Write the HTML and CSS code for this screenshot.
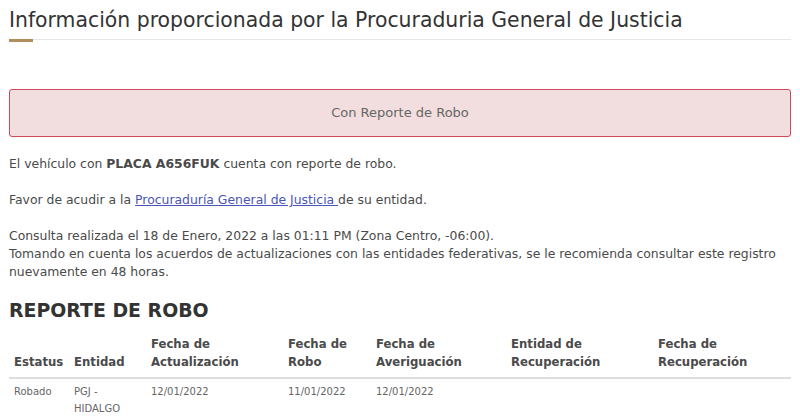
FILE: index.html
```html
<!DOCTYPE html>
<html lang="es">
<head>
    <meta charset="UTF-8">
    <meta name="viewport" content="width=device-width, initial-scale=1.0">
    <title>Consulta REPUVE</title>
    <link rel="stylesheet" href="styles.css">
</head>
<body>
    <div class="container">
        <h2 class="title">Información proporcionada por la Procuraduria General de Justicia</h2>
        <div class="title-rule"><span class="small-bar"></span></div>

        <div class="alert">Con Reporte de Robo</div>

        <p>El vehículo con <strong>PLACA A656FUK</strong> cuenta con reporte de robo.</p>
        <p>Favor de acudir a la <a href="#">Procuraduría General de Justicia </a>de su entidad.</p>
        <p>Consulta realizada el 18 de Enero, 2022 a las 01:11 PM (Zona Centro, -06:00).<br>
        Tomando en cuenta los acuerdos de actualizaciones con las entidades federativas, se le recomienda consultar este registro nuevamente en 48 horas.</p>

        <h3 class="section-title">REPORTE DE ROBO</h3>
        <table class="report">
            <colgroup>
                <col class="c1"><col class="c2"><col class="c3"><col class="c4"><col class="c5"><col class="c6"><col class="c7">
            </colgroup>
            <thead>
                <tr>
                    <th>Estatus</th>
                    <th>Entidad</th>
                    <th>Fecha de Actualización</th>
                    <th>Fecha de Robo</th>
                    <th>Fecha de Averiguación</th>
                    <th>Entidad de Recuperación</th>
                    <th>Fecha de Recuperación</th>
                </tr>
            </thead>
            <tbody>
                <tr>
                    <td>Robado</td>
                    <td>PGJ - HIDALGO</td>
                    <td>12/01/2022</td>
                    <td>11/01/2022</td>
                    <td>12/01/2022</td>
                    <td></td>
                    <td></td>
                </tr>
            </tbody>
        </table>
    </div>
</body>
</html>
```

FILE: styles.css
```css
body {
    font-family: "DejaVu Sans", sans-serif;
    color: #4a4a4a;
    background: #fff;
    margin: 0;
    padding: 0;
}

.container {
    padding: 0 9px;
}

.title {
    font-size: 20.4px;
    font-weight: normal;
    color: #333;
    margin: 0;
    padding-top: 6px;
    line-height: 28px;
}

.title-rule {
    border-bottom: 1px solid #e6e6e6;
    margin-top: 5px;
    position: relative;
    height: 0;
}

.small-bar {
    position: absolute;
    left: 0;
    top: 0;
    width: 24px;
    height: 3px;
    background: #b38e5d;
}

.alert {
    margin-top: 49px;
    height: 46px;
    line-height: 46px;
    background: #f2dede;
    border: 1px solid #d04a5a;
    border-radius: 3px;
    text-align: center;
    color: #666;
    font-size: 13px;
}

p {
    font-size: 12.4px;
    line-height: 18px;
    margin: 18px 0 0;
}

p + p {
    margin-top: 18px;
}

a {
    color: #4a55b5;
}

.section-title {
    font-size: 18.9px;
    font-weight: bold;
    color: #333;
    margin: 16px 0 0;
    line-height: 26px;
}

.report {
    width: 100%;
    border-collapse: collapse;
    margin-top: 12px;
    font-size: 11.7px;
}

.report th {
    text-align: left;
    vertical-align: bottom;
    font-weight: bold;
    line-height: 18px;
    padding: 0 5px 6px;
    border-bottom: 2px solid #ddd;
}

.report td {
    font-size: 10px;
    line-height: 17px;
    color: #666;
    vertical-align: top;
    padding: 4px 5px 0;
}

.c1 { width: 60px; }
.c2 { width: 77px; }
.c3 { width: 137px; }
.c4 { width: 88px; }
.c5 { width: 135px; }
.c6 { width: 147px; }
.c7 { width: 138px; }
```
